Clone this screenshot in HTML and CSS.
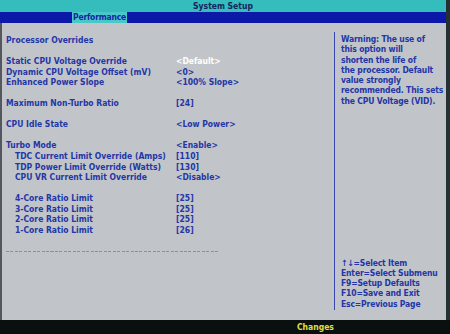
FILE: index.html
```html
<!DOCTYPE html>
<html lang="en">
<head>
  <meta charset="UTF-8">
  <title>System Setup</title>
  <link rel="stylesheet" href="styles.css">
</head>
<body>
  <div class="screen">
    <div class="title">System Setup</div>
    <div class="tabs">
      <span class="tab">Performance</span>
    </div>

    <div class="main">
      <div class="options">
        <div class="row"><span class="label">Processor Overrides</span></div>
        <div class="row blank"></div>
        <div class="row"><span class="label">Static CPU Voltage Override</span><span class="value selected">&lt;Default&gt;</span></div>
        <div class="row"><span class="label">Dynamic CPU Voltage Offset (mV)</span><span class="value">&lt;0&gt;</span></div>
        <div class="row"><span class="label">Enhanced Power Slope</span><span class="value">&lt;100% Slope&gt;</span></div>
        <div class="row blank"></div>
        <div class="row"><span class="label">Maximum Non-Turbo Ratio</span><span class="value">[24]</span></div>
        <div class="row blank"></div>
        <div class="row"><span class="label">CPU Idle State</span><span class="value">&lt;Low Power&gt;</span></div>
        <div class="row blank"></div>
        <div class="row"><span class="label">Turbo Mode</span><span class="value">&lt;Enable&gt;</span></div>
        <div class="row sub"><span class="label">TDC Current Limit Override (Amps)</span><span class="value">[110]</span></div>
        <div class="row sub"><span class="label">TDP Power Limit Override (Watts)</span><span class="value">[130]</span></div>
        <div class="row sub"><span class="label">CPU VR Current Limit Override</span><span class="value">&lt;Disable&gt;</span></div>
        <div class="row blank"></div>
        <div class="row sub"><span class="label">4-Core Ratio Limit</span><span class="value">[25]</span></div>
        <div class="row sub"><span class="label">3-Core Ratio Limit</span><span class="value">[25]</span></div>
        <div class="row sub"><span class="label">2-Core Ratio Limit</span><span class="value">[25]</span></div>
        <div class="row sub"><span class="label">1-Core Ratio Limit</span><span class="value">[26]</span></div>
        <div class="row blank"></div>
        <div class="row"><span class="dashes"></span></div>
      </div>

      <div class="help">
        <p class="help-text">Warning: The use of<br>this option will<br>shorten the life of<br>the processor. Default<br>value strongly<br>recommended. This sets<br>the CPU Voltage (VID).</p>
        <p class="keys">↑↓=Select Item<br>Enter=Select Submenu<br>F9=Setup Defaults<br>F10=Save and Exit<br>Esc=Previous Page</p>
      </div>
    </div>

    <div class="footer">
      <span class="changes">Changes</span>
    </div>
  </div>
</body>
</html>
```

FILE: styles.css
```css
body {
  margin: 0;
  padding: 0;
  background: #c1c5c9;
  font-family: "DejaVu Sans", "Liberation Sans", sans-serif;
  font-stretch: condensed;
  font-weight: bold;
  font-size: 8.5px;
  overflow: hidden;
}

.screen {
  width: 450px;
  height: 334px;
  display: flex;
  flex-direction: column;
}

/* barre du haut */
.title {
  height: 12px;
  line-height: 12px;
  background: #35bcbc;
  color: #14245e;
  text-align: center;
  border-right: 4px solid #263034;
}

.tabs {
  height: 11px;
  background: #0c18a8;
  padding-left: 72px;
  display: flex;
  border-right: 4px solid #263034;
}

.tab {
  padding: 0 1px;
  line-height: 11px;
  letter-spacing: -0.2px;
  background: #48c8c8;
  color: #1424a4;
}

/* zone principale */
.main {
  flex: 1;
  display: flex;
  border-left: 2px solid #54585e;
  border-right: 4px solid #263034;
}

.options {
  width: 328px;
  padding: 12px 0 0 4px;
  color: #2436a6;
}

.row {
  display: flex;
  height: 10.55px;
  line-height: 10.55px;
  white-space: nowrap;
}

.label {
  width: 170px;
}

.sub .label {
  padding-left: 9px;
  width: 161px;
}

.value.selected {
  color: #ffffff;
}

.dashes {
  width: 214px;
  height: 1px;
  margin-top: 5px;
  background: repeating-linear-gradient(90deg, #8a909c 0 3px, transparent 3px 4.45px);
}

.help {
  flex: 1;
  margin: 9px 0 10px 0;
  border-left: 1px solid #3848b0;
  padding: 2px 0 1px 6px;
  display: flex;
  flex-direction: column;
  justify-content: space-between;
  color: #2436a6;
  letter-spacing: -0.15px;
}

.help p {
  margin: 0;
  line-height: 10.3px;
  white-space: nowrap;
}

/* barre du bas */
.footer {
  height: 14px;
  line-height: 14px;
  background: #0a1010;
  padding-left: 297px;
}

.changes {
  color: #e0e040;
}
```
